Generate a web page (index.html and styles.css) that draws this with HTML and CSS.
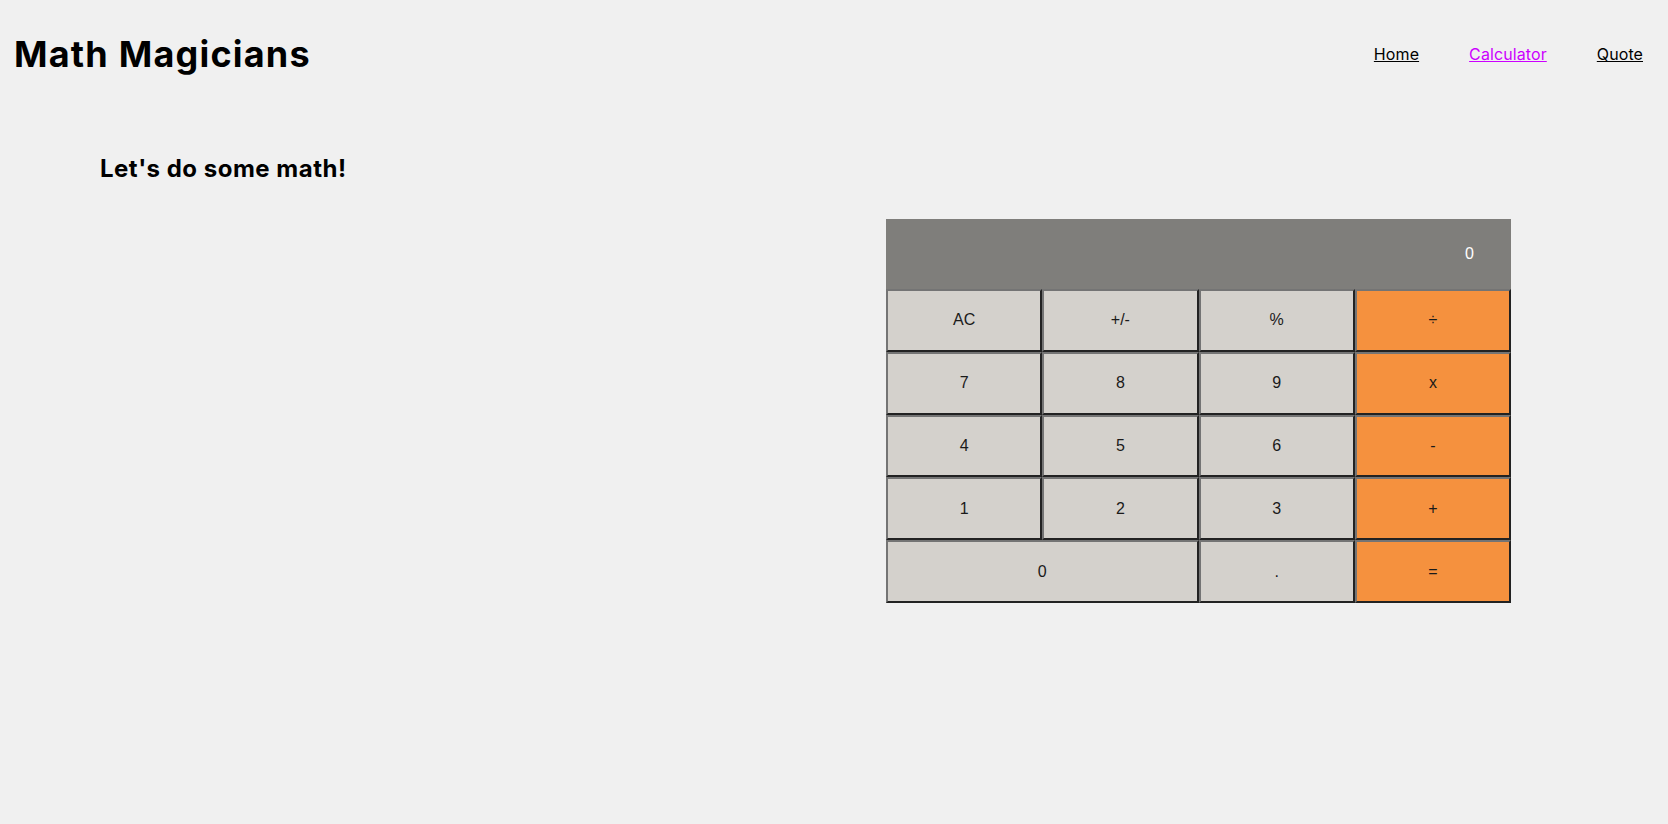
FILE: index.html
```html
<!DOCTYPE html>
<html lang="en">
<head>
<meta charset="utf-8">
<title>Math Magicians</title>
<link rel="stylesheet" href="styles.css">
</head>
<body>
<header class="header">
  <h1 class="logo">Math Magicians</h1>
  <nav class="nav">
    <a href="#" class="nav-link">Home</a>
    <a href="#" class="nav-link active">Calculator</a>
    <a href="#" class="nav-link">Quote</a>
  </nav>
</header>
<main class="main">
  <h2 class="title">Let's do some math!</h2>
  <div class="calc-wrap">
    <div class="calculator">
      <div class="display">0</div>
      <button class="key" type="button">AC</button>
      <button class="key" type="button">+/-</button>
      <button class="key" type="button">%</button>
      <button class="key op" type="button">÷</button>
      <button class="key" type="button">7</button>
      <button class="key" type="button">8</button>
      <button class="key" type="button">9</button>
      <button class="key op" type="button">x</button>
      <button class="key" type="button">4</button>
      <button class="key" type="button">5</button>
      <button class="key" type="button">6</button>
      <button class="key op" type="button">-</button>
      <button class="key" type="button">1</button>
      <button class="key" type="button">2</button>
      <button class="key" type="button">3</button>
      <button class="key op" type="button">+</button>
      <button class="key zero" type="button">0</button>
      <button class="key" type="button">.</button>
      <button class="key op" type="button">=</button>
    </div>
  </div>
</main>
</body>
</html>
```

FILE: styles.css
```css
* {
  box-sizing: border-box;
}

body {
  margin: 0;
  background: #f0f0f0;
  font-family: Inter, "Noto Sans", sans-serif;
  color: #000;
}

.header {
  display: flex;
  align-items: center;
  justify-content: space-between;
  padding: 32px 25px 0 14px;
}

.logo {
  margin: 0;
  font-size: 36px;
  font-weight: 700;
  line-height: normal;
  letter-spacing: 1.2px;
}

.nav {
  display: flex;
  gap: 50px;
}

.nav-link {
  font-size: 16px;
  color: #000;
  text-decoration: underline;
  letter-spacing: 0.1px;
}

.nav-link.active {
  color: #cc00ff;
}

.main {
  padding: 0 157px 0 100px;
}

.title {
  margin: 78px 0 0;
  font-size: 24px;
  font-weight: 700;
  line-height: normal;
  letter-spacing: 0.5px;
}

.calc-wrap {
  display: flex;
  justify-content: flex-end;
  margin-top: 36px;
}

.calculator {
  width: 625px;
  display: grid;
  grid-template-columns: repeat(4, 1fr);
  grid-template-rows: 70px;
  grid-auto-rows: 62.8px;
}

.display {
  grid-column: 1 / -1;
  background: #7f7e7b;
  color: #fff;
  font-family: "Liberation Sans", Arial, sans-serif;
  font-size: 16px;
  display: flex;
  align-items: center;
  justify-content: flex-end;
  padding-right: 37px;
}

.key {
  margin: 0;
  background: #d4d1cc;
  border: 2px solid;
  border-color: #747474 #222 #222 #747474;
  font-family: "Liberation Sans", Arial, sans-serif;
  font-size: 16px;
  color: #1a1a1a;
  padding: 0;
}

.key.op {
  background: #f5913e;
}

.key.zero {
  grid-column: span 2;
}
```
